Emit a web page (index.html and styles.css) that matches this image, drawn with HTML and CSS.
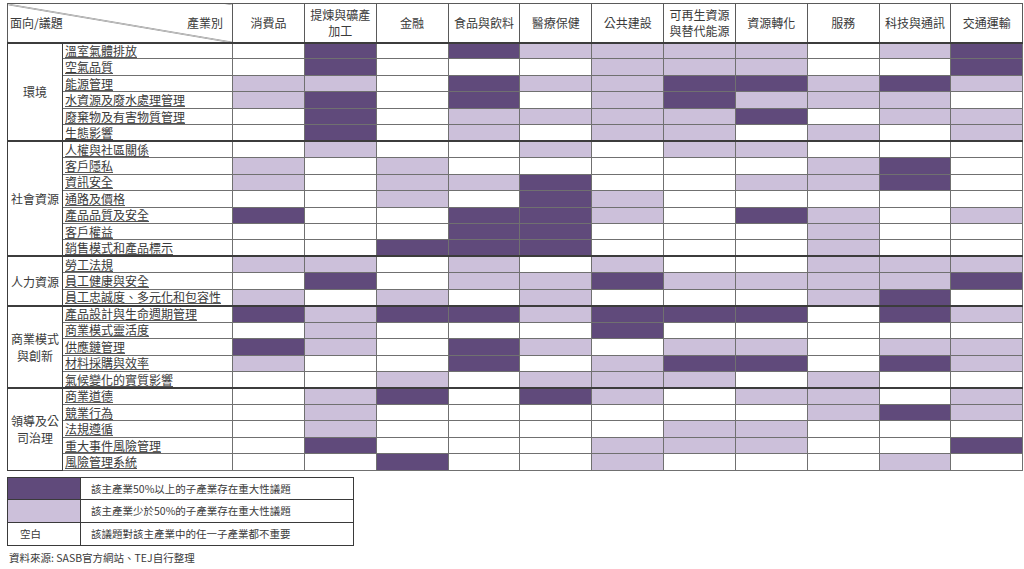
FILE: index.html
```html
<!DOCTYPE html>
<html lang="zh-Hant">
<head>
<meta charset="utf-8">
<title>SASB 重大性議題矩陣</title>
<link rel="stylesheet" href="styles.css">
</head>
<body>
<div class="page">
<table class="matrix">
  <colgroup>
    <col class="c-cat"><col class="c-issue">
    <col class="c-ind"><col class="c-ind"><col class="c-ind"><col class="c-ind"><col class="c-ind"><col class="c-ind"><col class="c-ind"><col class="c-ind"><col class="c-ind"><col class="c-ind"><col class="c-ind">
  </colgroup>
  <thead>
    <tr>
      <th colspan="2" class="corner"><div class="corner-in"><span>面向/議題</span><span>產業別</span></div></th>
      <th>消費品</th>
      <th>提煉與礦產<br>加工</th>
      <th>金融</th>
      <th>食品與飲料</th>
      <th>醫療保健</th>
      <th>公共建設</th>
      <th>可再生資源<br>與替代能源</th>
      <th>資源轉化</th>
      <th>服務</th>
      <th>科技與通訊</th>
      <th>交通運輸</th>
    </tr>
  </thead>
  <tbody class="grp">
    <tr><td class="cat" rowspan="6">環境</td><td class="issue"><span>溫室氣體排放</span></td><td></td><td class="d"></td><td></td><td class="d"></td><td class="l"></td><td class="l"></td><td class="l"></td><td class="l"></td><td></td><td class="l"></td><td class="d"></td></tr>
    <tr><td class="issue"><span>空氣品質</span></td><td></td><td class="d"></td><td></td><td></td><td></td><td class="l"></td><td class="l"></td><td class="l"></td><td></td><td></td><td class="d"></td></tr>
    <tr><td class="issue"><span>能源管理</span></td><td class="l"></td><td class="l"></td><td></td><td class="d"></td><td class="l"></td><td class="l"></td><td class="d"></td><td class="d"></td><td class="l"></td><td class="d"></td><td class="l"></td></tr>
    <tr><td class="issue"><span>水資源及廢水處理管理</span></td><td class="l"></td><td class="d"></td><td></td><td class="d"></td><td></td><td class="l"></td><td class="d"></td><td class="l"></td><td class="l"></td><td class="l"></td><td></td></tr>
    <tr><td class="issue"><span>廢棄物及有害物質管理</span></td><td></td><td class="d"></td><td></td><td class="l"></td><td class="l"></td><td class="l"></td><td class="l"></td><td class="d"></td><td></td><td class="l"></td><td class="l"></td></tr>
    <tr><td class="issue"><span>生態影響</span></td><td></td><td class="d"></td><td></td><td class="l"></td><td></td><td class="l"></td><td class="l"></td><td></td><td class="l"></td><td></td><td class="l"></td></tr>
  </tbody>
  <tbody class="grp">
    <tr><td class="cat" rowspan="7">社會資源</td><td class="issue"><span>人權與社區關係</span></td><td></td><td class="l"></td><td></td><td></td><td class="l"></td><td></td><td class="l"></td><td class="l"></td><td></td><td></td><td></td></tr>
    <tr><td class="issue"><span>客戶隱私</span></td><td class="l"></td><td></td><td class="l"></td><td></td><td></td><td></td><td></td><td></td><td class="l"></td><td class="d"></td><td></td></tr>
    <tr><td class="issue"><span>資訊安全</span></td><td class="l"></td><td></td><td class="l"></td><td class="l"></td><td class="d"></td><td></td><td></td><td class="l"></td><td class="l"></td><td class="d"></td><td></td></tr>
    <tr><td class="issue"><span>通路及價格</span></td><td></td><td></td><td class="l"></td><td></td><td class="d"></td><td class="l"></td><td></td><td></td><td></td><td></td><td></td></tr>
    <tr><td class="issue"><span>產品品質及安全</span></td><td class="d"></td><td></td><td></td><td class="d"></td><td class="d"></td><td class="l"></td><td></td><td class="d"></td><td class="l"></td><td></td><td class="l"></td></tr>
    <tr><td class="issue"><span>客戶權益</span></td><td></td><td></td><td></td><td class="d"></td><td class="d"></td><td></td><td></td><td></td><td class="l"></td><td></td><td></td></tr>
    <tr><td class="issue"><span>銷售模式和產品標示</span></td><td></td><td></td><td class="d"></td><td class="d"></td><td class="d"></td><td></td><td></td><td></td><td class="l"></td><td></td><td></td></tr>
  </tbody>
  <tbody class="grp">
    <tr><td class="cat" rowspan="3">人力資源</td><td class="issue"><span>勞工法規</span></td><td class="l"></td><td class="l"></td><td></td><td class="l"></td><td></td><td class="l"></td><td></td><td></td><td class="l"></td><td class="l"></td><td class="l"></td></tr>
    <tr><td class="issue"><span>員工健康與安全</span></td><td></td><td class="d"></td><td></td><td class="l"></td><td class="l"></td><td class="d"></td><td class="l"></td><td class="l"></td><td class="l"></td><td class="l"></td><td class="d"></td></tr>
    <tr><td class="issue"><span>員工忠誠度、多元化和包容性</span></td><td class="l"></td><td></td><td class="l"></td><td></td><td class="l"></td><td></td><td></td><td></td><td class="l"></td><td class="d"></td><td></td></tr>
  </tbody>
  <tbody class="grp">
    <tr><td class="cat" rowspan="5">商業模式<br>與創新</td><td class="issue"><span>產品設計與生命週期管理</span></td><td class="d"></td><td class="l"></td><td class="d"></td><td class="d"></td><td class="l"></td><td class="d"></td><td class="d"></td><td class="d"></td><td></td><td class="d"></td><td class="l"></td></tr>
    <tr><td class="issue"><span>商業模式靈活度</span></td><td></td><td class="l"></td><td></td><td></td><td></td><td class="d"></td><td></td><td></td><td></td><td></td><td></td></tr>
    <tr><td class="issue"><span>供應鏈管理</span></td><td class="d"></td><td class="l"></td><td></td><td class="d"></td><td class="l"></td><td></td><td class="l"></td><td class="l"></td><td></td><td class="l"></td><td class="l"></td></tr>
    <tr><td class="issue"><span>材料採購與效率</span></td><td class="l"></td><td></td><td></td><td class="d"></td><td></td><td class="l"></td><td class="d"></td><td class="d"></td><td></td><td class="d"></td><td class="l"></td></tr>
    <tr><td class="issue"><span>氣候變化的實質影響</span></td><td></td><td></td><td class="l"></td><td></td><td class="l"></td><td class="l"></td><td class="l"></td><td></td><td class="l"></td><td></td><td></td></tr>
  </tbody>
  <tbody class="grp">
    <tr><td class="cat" rowspan="5">領導及公<br>司治理</td><td class="issue"><span>商業道德</span></td><td></td><td class="l"></td><td class="d"></td><td></td><td class="d"></td><td class="l"></td><td></td><td class="l"></td><td class="l"></td><td></td><td class="l"></td></tr>
    <tr><td class="issue"><span>競業行為</span></td><td></td><td class="l"></td><td></td><td></td><td></td><td></td><td></td><td></td><td class="l"></td><td class="d"></td><td class="l"></td></tr>
    <tr><td class="issue"><span>法規遵循</span></td><td></td><td class="l"></td><td></td><td></td><td></td><td></td><td class="l"></td><td class="l"></td><td></td><td></td><td></td></tr>
    <tr><td class="issue"><span>重大事件風險管理</span></td><td></td><td class="d"></td><td></td><td></td><td></td><td class="l"></td><td class="l"></td><td class="l"></td><td></td><td></td><td class="d"></td></tr>
    <tr><td class="issue"><span>風險管理系統</span></td><td></td><td></td><td class="d"></td><td></td><td></td><td class="l"></td><td></td><td></td><td></td><td class="l"></td><td></td></tr>
  </tbody>
</table>

<table class="legend">
  <colgroup><col class="lg-sw"><col class="lg-tx"></colgroup>
  <tr><td class="d"></td><td class="lg-text">該主產業50%以上的子產業存在重大性議題</td></tr>
  <tr><td class="l"></td><td class="lg-text">該主產業少於50%的子產業存在重大性議題</td></tr>
  <tr><td class="lg-blank">空白</td><td class="lg-text">該議題對該主產業中的任一子產業都不重要</td></tr>
</table>

<p class="source">資料來源: SASB官方網站、TEJ自行整理</p>
</div>
</body>
</html>
```

FILE: styles.css
```css
* { box-sizing: border-box; }

body {
  margin: 0;
  background: #ffffff;
  font-family: "Noto Sans CJK TC", "Noto Sans CJK SC", "Noto Sans", sans-serif;
  color: #3a3a3a;
}

.page {
  padding: 3px 0 0 7px;
}

.matrix {
  border-collapse: collapse;
  table-layout: fixed;
  width: 1015px;
}

.c-cat { width: 55px; }
.c-issue { width: 170px; }
.c-ind { width: 71.85px; }

.matrix th,
.matrix td {
  border: 1px solid #707070;
  padding: 0;
}

.matrix thead th {
  height: 39px;
  font-weight: normal;
  font-size: 12px;
  line-height: 16px;
  text-align: center;
  vertical-align: middle;
  border-color: #5a5a5a;
}

.matrix thead th.corner {
  background: linear-gradient(to top right,
    transparent calc(50% - 0.8px),
    #555555 50%,
    transparent calc(50% + 0.8px));
}

.corner-in {
  display: flex;
  justify-content: space-between;
  align-items: center;
  padding: 0 9px 0 2px;
}

.matrix tbody tr {
  height: 16.46px;
}

.matrix tbody td {
  font-size: 12px;
  line-height: 14px;
  white-space: nowrap;
}

.matrix tbody.grp {
  border-top: 2px solid #3c3c3c;
}

.matrix td.cat {
  text-align: center;
  vertical-align: middle;
  white-space: normal;
  line-height: 17px;
  border-color: #3c3c3c;
}

.matrix td.issue {
  padding-left: 2px;
  overflow: hidden;
}

.matrix td.issue span {
  text-decoration: underline;
  text-decoration-color: #555555;
  text-underline-offset: 1px;
}

.d { background: #604a7b; }
.l { background: #ccc0da; }

.legend {
  margin-top: 6px;
  border-collapse: collapse;
  table-layout: fixed;
  width: 346px;
}

.lg-sw { width: 73px; }
.lg-tx { width: 273px; }

.legend td {
  border: 1px solid #3a3a3a;
  height: 22.7px;
  padding: 0;
  font-size: 10.5px;
  line-height: 14px;
}

.legend td.lg-text {
  padding-left: 10px;
}

.legend td.lg-blank {
  padding-left: 12px;
}

.source {
  margin: 5px 0 0 2px;
  font-size: 10.5px;
  line-height: 14px;
  color: #3a3a3a;
}
```
